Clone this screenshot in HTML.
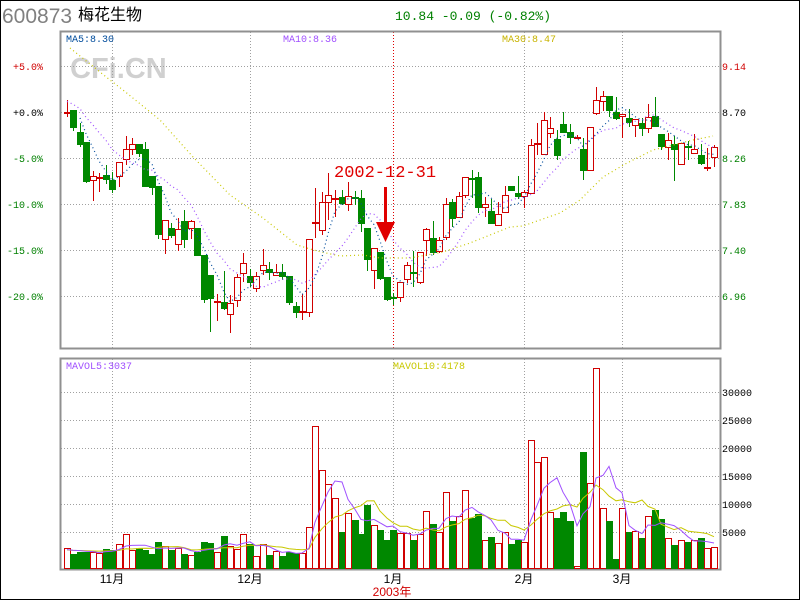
<!DOCTYPE html>
<html><head><meta charset="utf-8">
<style>
html,body{margin:0;padding:0;background:#fff;}
body{width:800px;height:600px;overflow:hidden;position:relative;}
svg{position:absolute;left:0;top:0;}
</style></head>
<body>
<svg id="s" width="800" height="600" xmlns="http://www.w3.org/2000/svg" font-family="'Liberation Mono',monospace">
<rect x="0.5" y="0.5" width="799" height="599" fill="#fff" stroke="#000"/>
<text x="2" y="23" font-family="'Liberation Sans',sans-serif" font-size="21" fill="#808080">600873</text>
<text x="78" y="20" font-family="'Liberation Sans','Noto Sans CJK SC',sans-serif" font-size="16" fill="#000">梅花生物</text>
<text x="395" y="20" font-size="13" fill="#008000">10.84 -0.09 (-0.82%)</text>
<text x="70" y="78" font-family="'Liberation Sans',sans-serif" font-weight="bold" font-size="29" fill="#d0d0d0">CFi.CN</text>
<g id="grid" stroke="#a0a0a0" stroke-dasharray="1,2" stroke-width="1" shape-rendering="crispEdges"></g>
<rect x="60.5" y="31.5" width="660" height="317" fill="none" stroke="#909090" stroke-width="2"/>
<rect x="60.5" y="358.5" width="660" height="211" fill="none" stroke="#909090" stroke-width="2"/>
<g font-size="10">
<text x="66" y="42" fill="#004c9c">MA5:8.30</text>
<text x="283" y="42" fill="#a050ff">MA10:8.36</text>
<text x="502" y="42" fill="#c8b400">MA30:8.47</text>
<text x="66" y="369" fill="#a050ff">MAVOL5:3037</text>
<text x="393" y="369" fill="#c8c800">MAVOL10:4178</text>
<g text-anchor="end">
<text x="43" y="70" fill="#d00000">+5.0%</text>
<text x="43" y="116" fill="#000">+0.0%</text>
<text x="43" y="162" fill="#008000">-5.0%</text>
<text x="43" y="208" fill="#008000">-10.0%</text>
<text x="43" y="254" fill="#008000">-15.0%</text>
<text x="43" y="300" fill="#008000">-20.0%</text>
</g>
<text x="722" y="70" fill="#d00000">9.14</text>
<text x="722" y="116" fill="#000">8.70</text>
<text x="722" y="162" fill="#008000">8.26</text>
<text x="722" y="208" fill="#008000">7.83</text>
<text x="722" y="254" fill="#008000">7.40</text>
<text x="722" y="300" fill="#008000">6.96</text>
<text x="722" y="396" fill="#000">30000</text>
<text x="722" y="424" fill="#000">25000</text>
<text x="722" y="452" fill="#000">20000</text>
<text x="722" y="480" fill="#000">15000</text>
<text x="722" y="508" fill="#000">10000</text>
<text x="722" y="536" fill="#000">5000</text>
</g>
<g font-family="'Liberation Sans','Noto Sans CJK SC',sans-serif" font-size="12" text-anchor="middle">
<text x="112" y="583" fill="#000">11月</text>
<text x="250" y="583" fill="#000">12月</text>
<text x="393" y="583" fill="#000">1月</text>
<text x="524" y="583" fill="#000">2月</text>
<text x="622" y="583" fill="#000">3月</text>
<text x="392" y="596" fill="#d00000">2003年</text>
</g>
<g id="chart" shape-rendering="crispEdges"></g>
<g id="lines"></g>
<text x="334" y="177" font-size="17" fill="#e00000">2002-12-31</text>
<rect x="384" y="187" width="3" height="40" fill="#e00000"/>
<polygon points="376,222 395,222 385.5,242" fill="#e00000"/>
</svg>
<script>
var NS="http://www.w3.org/2000/svg";
function el(p,t,a){var e=document.createElementNS(NS,t);for(var k in a)e.setAttribute(k,a[k]);p.appendChild(e);return e;}
var g=document.getElementById('grid');
[66,112,158,204,250,296].forEach(function(y){el(g,'line',{x1:61,x2:720,y1:y+.5,y2:y+.5});});
[392,420,448,476,504,532].forEach(function(y){el(g,'line',{x1:61,x2:720,y1:y+.5,y2:y+.5});});
[112,250,524,622].forEach(function(x){el(g,'line',{x1:x+.5,x2:x+.5,y1:32,y2:348});el(g,'line',{x1:x+.5,x2:x+.5,y1:359,y2:569});});
el(g,'line',{x1:393.5,x2:393.5,y1:32,y2:348,stroke:'#e00000'});
el(g,'line',{x1:393.5,x2:393.5,y1:359,y2:569});
var C="r67,112,113,100,117;g73,110,127,110,131;g80,132,144,123,147;g86,142,181,142,183;r93,176,180,171,201;r99,177,177,173,192;g106,175,179,165,184;g112,180,189,172,193;r119,162,176,162,187;r126,149,159,136,165;r132,144,149,138,155;g139,144,153,144,157;g145,149,186,142,186;g152,176,187,176,195;g158,186,234,186,239;r165,220,239,220,254;g171,228,235,223,238;r178,229,244,218,251;g184,221,239,210,248;r191,221,228,220,239;g197,228,255,228,255;g204,255,299,255,303;g210,275,298,275,332;r217,301,301,294,321;g224,302,308,271,310;r230,303,314,295,333;r237,277,300,274,307;r243,263,273,253,282;g250,276,282,269,287;r256,276,288,272,292;r263,265,270,249,275;g269,269,272,262,280;r276,272,275,264,276;g282,272,276,264,280;g289,276,302,276,305;g296,306,312,302,318;r302,311,311,294,320;r309,239,312,239,317;r315,222,222,188,238;r322,202,230,192,235;r328,195,202,173,220;r335,198,198,190,217;g342,197,203,190,205;r348,196,204,182,211;g355,197,197,191,205;g361,198,223,190,232;g367,228,259,228,271;r374,248,270,248,289;g380,252,278,252,280;g387,277,299,277,301;g393,297,297,293,305;r400,282,297,282,302;r407,265,279,262,283;g413,272,272,251,287;r420,252,282,252,284;r426,229,240,228,256;g433,238,252,221,255;r439,240,251,237,253;r446,204,237,198,240;g452,202,218,199,227;r459,196,217,192,218;r465,177,195,177,198;g472,178,178,170,198;g478,177,207,172,213;r485,204,207,197,217;g491,211,223,199,223;r498,214,225,202,225;r505,195,212,186,212;g511,186,190,186,190;g518,193,196,176,199;r524,192,196,190,208;r531,145,193,139,193;r537,143,143,123,155;r544,120,154,112,155;r550,128,133,117,138;g557,139,155,130,160;g563,124,132,112,133;g570,132,137,124,144;r577,137,137,135,139;g583,149,170,138,180;r590,127,170,127,171;r596,100,113,87,115;r603,96,101,91,111;g609,96,110,96,117;g616,112,118,97,120;r622,114,116,114,138;g629,118,122,109,127;r635,119,125,119,137;g642,123,128,118,136;r648,117,128,104,133;g655,116,126,97,126;g661,134,146,134,150;r668,140,147,133,160;g674,144,149,136,181;r681,143,164,143,165;g688,146,146,141,160;r694,149,153,134,153;g701,155,163,144,165;r707,167,167,148,171;r714,147,157,145,167";
var V=[548,554,552,552,552,553,549,550,544,534,550,548,550,554,542,546,550,548,554,555,552,542,543,552,536,546,549,534,544,556,544,555,551,556,552,553,553,527,426,470,484,498,532,513,520,534,505,525,530,540,530,533,533,540,534,511,524,532,492,521,516,490,518,514,540,537,543,532,544,540,542,440,462,457,512,518,512,521,566,452,483,368,508,521,559,508,532,531,538,516,510,519,538,545,540,542,540,538,548,547];
var ch=document.getElementById('chart'),ln=document.getElementById('lines');
var RED='#d00000',GRN='#008800';
var data=C.split(';').map(function(s){var c=s[0];var n=s.slice(1).split(',').map(Number);return {c:c,x:n[0],t:n[1],b:n[2],h:n[3],l:n[4]};});
var y30=[[70,48],[110,80],[123,90],[160,120],[193,157],[230,195],[263,218],[297,245],[317,251],[340,256],[363,255],[380,258],[410,258],[443,252],[470,243],[510,227],[523,226],[540,220],[560,213],[580,200],[603,177],[627,163],[653,150],[673,145],[693,140],[713,136]];
el(ln,'polyline',{points:y30.map(function(p){return p.join(',');}).join(' '),fill:'none',stroke:'#c8c800','stroke-dasharray':'1,3','stroke-width':1.2});
var closes=[100,98,96,99,102,100,101,103,104].concat(data.map(function(d){return d.c=='r'?d.t:d.b;}));
function ma(arr,n,off){var out=[];for(var i=off;i<arr.length;i++){var s=0,k=0;for(var j=Math.max(0,i-n+1);j<=i;j++){s+=arr[j];k++;}out.push(s/k);}return out;}
var m5=ma(closes,5,9),m10=ma(closes,10,9);
function line(vals,col,dash,start){var pts=[];for(var i=start;i<vals.length;i++)pts.push(data[i].x+','+vals[i].toFixed(1));el(ln,'polyline',{points:pts.join(' '),fill:'none',stroke:col,'stroke-dasharray':dash,'stroke-width':1.2});}
line(m10,'#a050ff','1,3',0);
line(m5,'#004c9c','1,3',2);
function hollow(x,y,w,h,col){el(ch,'rect',{x:x,y:y,width:w,height:h,fill:col});if(w>2&&h>2)el(ch,'rect',{x:x+1,y:y+1,width:w-2,height:h-2,fill:'#fff'});}
data.forEach(function(d,i){
  var col=d.c=='r'?RED:GRN;
  el(ch,'rect',{x:d.x,y:d.h,width:1,height:d.l-d.h,fill:col});
  var hgt=d.b-d.t;
  if(hgt<1){el(ch,'rect',{x:d.x-3,y:d.t,width:7,height:2,fill:col});}
  else if(d.c=='r'){hollow(d.x-3,d.t,7,hgt+1,col);}
  else{el(ch,'rect',{x:d.x-3,y:d.t,width:7,height:hgt+1,fill:col});}
  var vt=V[i];
  if(d.c=='r'){hollow(d.x-3,vt,7,569-vt,col);}
  else{el(ch,'rect',{x:d.x-3,y:vt,width:7,height:569-vt,fill:col});}
});
var vol=[20,18,20,19,17,18,19,20,19].concat(V.map(function(v){return 569-v;}));
var mv5=ma(vol,5,9),mv10=ma(vol,10,9);
function vline(vals,col){var pts=[];for(var i=0;i<vals.length;i++)pts.push(data[i].x+','+(569-vals[i]).toFixed(1));el(ln,'polyline',{points:pts.join(' '),fill:'none',stroke:col,'stroke-width':1});}
vline(mv10,'#c8c800');vline(mv5,'#a050ff');
</script>
</body></html>
